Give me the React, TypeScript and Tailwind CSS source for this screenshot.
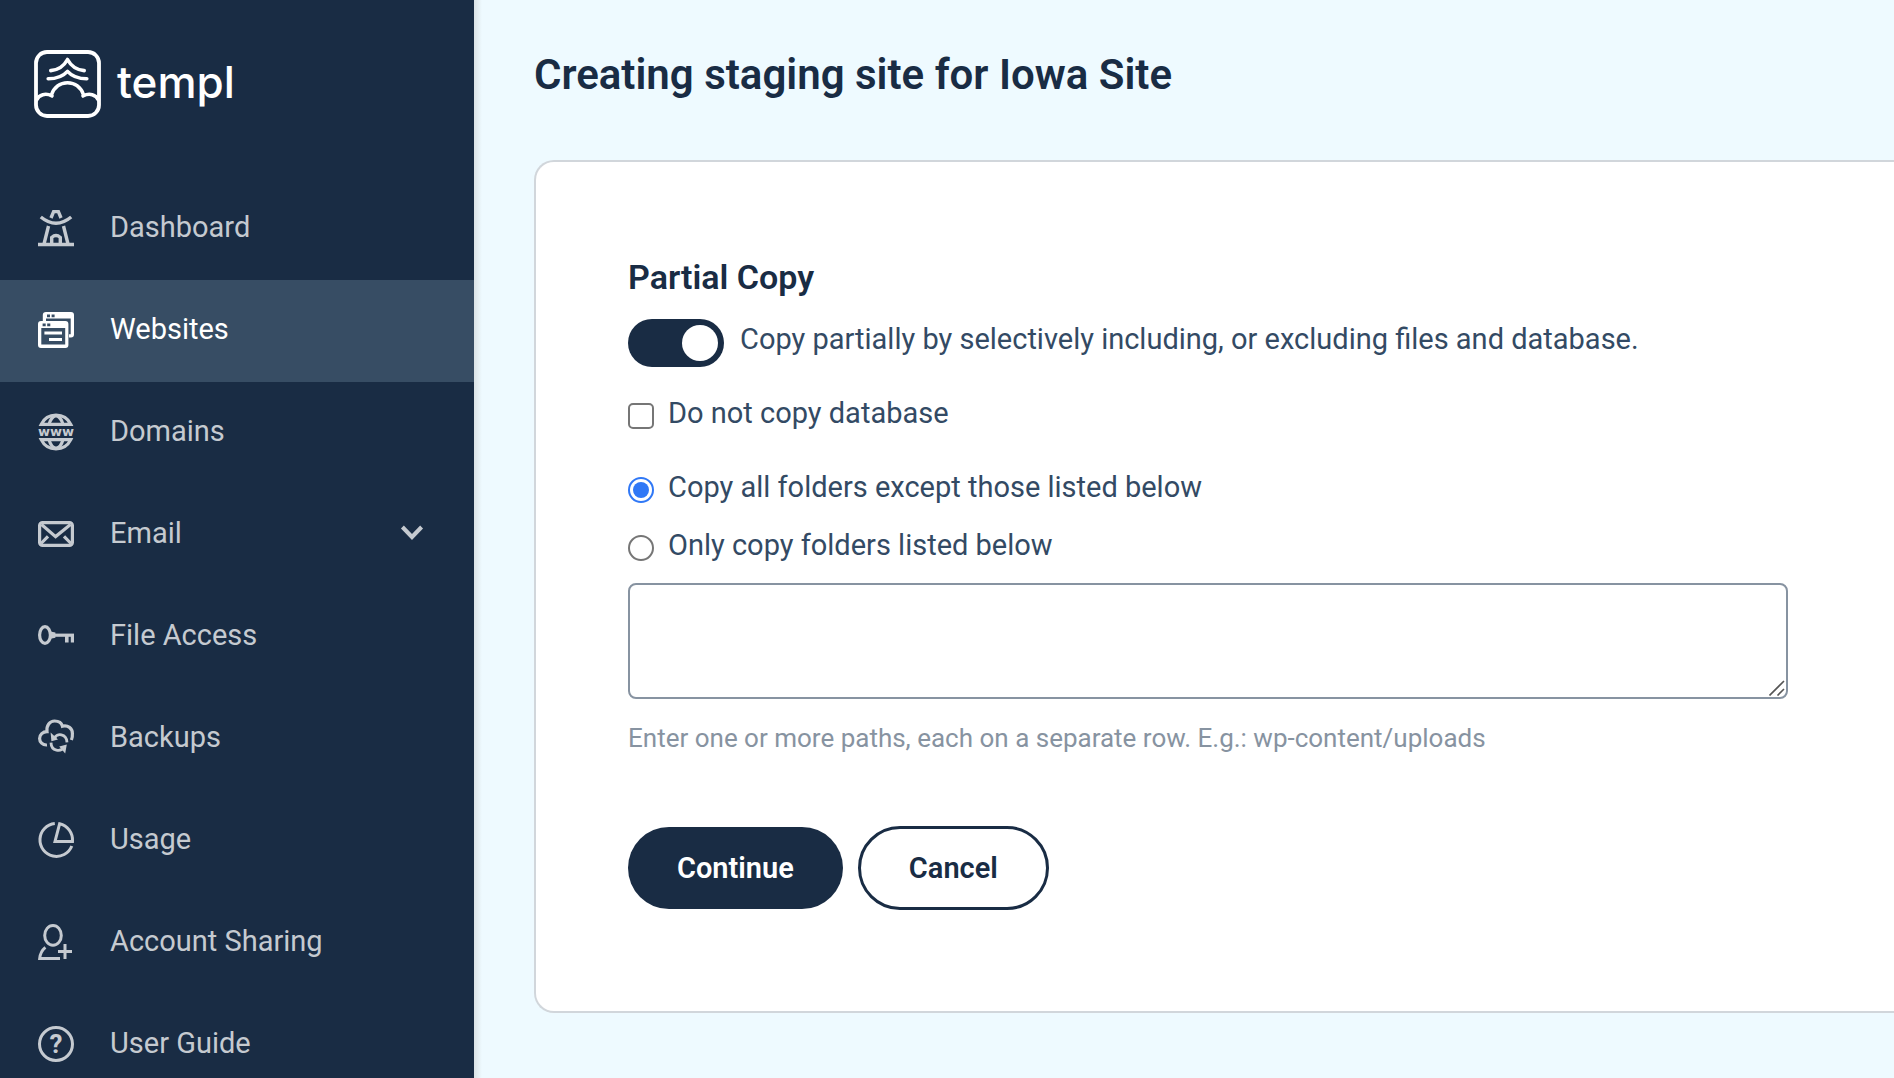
import { useState } from "react";
import type { ReactNode } from "react";

type NavItem = { label: string; icon: ReactNode; hasChildren?: boolean };

const navItems: NavItem[] = [
  {
    label: "Dashboard",
    icon: (
      <g strokeWidth="3.4">
        <path d="M13 8L15.6 1.6H20.4L23 8" />
        <path d="M2.8 7Q18 19.5 33.2 7" />
        <path d="M10.5 16L6 34M25.5 16L30 34M0 34.5H36" />
        <path d="M13.7 34V27.4Q18 23.6 22.3 27.4V34" />
      </g>
    ),
  },
  {
    label: "Websites",
    icon: (
      <g stroke="none" fill="currentColor">
        <path fillRule="evenodd" d="M8 0H33Q36 0 36 3V22.5Q36 25.5 33 25.5H31V22.3H32.7V6.4H8V9H4.8V3Q4.8 0 8 0ZM9 2.6V5.2H12V2.6ZM13.6 2.6V5.2H16.6V2.6Z" />
        <path fillRule="evenodd" d="M3 9H27.4Q30.4 9 30.4 12V33Q30.4 36 27.4 36H3Q0 36 0 33V12Q0 9 3 9ZM4.6 11.6V14.3H7.7V11.6ZM9.2 11.6V14.3H12.3V11.6ZM3.3 16V32.6H27.2V16Z" />
        <path d="M6.4 19.4H24V22.4H6.4ZM11 26H24V29H11Z" />
      </g>
    ),
  },
  {
    label: "Domains",
    icon: (
      <g strokeWidth="3.2">
        <path d="M3.2 10.4A16.5 16.5 0 0 1 32.8 10.4Z" />
        <path d="M11 10.4Q13 2.8 18 1.6Q23 2.8 25 10.4" />
        <path d="M3.2 25.6A16.5 16.5 0 0 0 32.8 25.6Z" />
        <path d="M11 25.6Q13 33.2 18 34.4Q23 33.2 25 25.6" />
        <text x="18" y="21.8" textAnchor="middle" fontSize="13" fontWeight="700" fontFamily="DejaVu Sans, sans-serif" stroke="none" fill="currentColor">www</text>
      </g>
    ),
  },
  {
    label: "Email",
    hasChildren: true,
    icon: (
      <g strokeWidth="3.2">
        <rect x="1.6" y="6.6" width="32.8" height="22.8" rx="3" />
        <path d="M3.5 8.5L17.6 20.6L32.5 8.5M3 27.5L10 20.3M33 27.5L26 20.3" />
      </g>
    ),
  },
  {
    label: "File Access",
    icon: (
      <g strokeWidth="3.2">
        <ellipse cx="7" cy="17" rx="5.4" ry="8.4" />
        <path d="M16 17.2H36" />
        <path d="M12.5 13.5L17.4 14.6V19.8L12.5 20.8ZM27 17H30.6V24.6H27ZM32.8 17H36V24.6H32.8Z" stroke="none" fill="currentColor" />
      </g>
    ),
  },
  {
    label: "Backups",
    icon: (
      <g strokeWidth="3.2">
        <path d="M9 25C4.5 25.3 1.6 22 1.6 18.4C1.6 14.6 4.8 11.6 9 11.6C8.2 5.6 11.8 1 16.6 1C20.6 1 23.6 3.2 24.4 6.2C30 4.8 34.4 8.4 34.4 13.4C34.6 16 34.2 18 33.4 20" />
        <path d="M16.5 18.4C18.5 12.6 28.6 13.4 29 22.4M13 22.6C13.2 31.4 23 32.4 26 27" strokeWidth="2.8" />
        <path d="M12.6 12.6L13.4 21.2L20 19.4ZM28.8 24.6L27.2 33.4L21.2 26.4Z" stroke="none" fill="currentColor" />
      </g>
    ),
  },
  {
    label: "Usage",
    icon: (
      <g strokeWidth="3">
        <path d="M16.8 1.5A16.5 16.5 0 1 0 33.8 24" />
        <path d="M21.6 1.8L17 19.4H34.5A16.8 16.8 0 0 0 21.6 1.8Z" />
      </g>
    ),
  },
  {
    label: "Account Sharing",
    icon: (
      <g strokeWidth="3">
        <ellipse cx="15" cy="11.4" rx="8.3" ry="9.9" />
        <path d="M7.4 23.4Q2.4 27.4 1.7 34.5H22" />
        <path d="M27 20V35M20 27.6H34" />
      </g>
    ),
  },
  {
    label: "User Guide",
    icon: (
      <g strokeWidth="3">
        <circle cx="18" cy="18" r="16.5" />
        <text x="18" y="27" textAnchor="middle" fontSize="26" fontWeight="700" fontFamily="Roboto, sans-serif" stroke="none" fill="currentColor">?</text>
      </g>
    ),
  },
];

function Logo() {
  return (
    <a href="#" className="flex items-center gap-4 pl-[34px] text-white">
      <svg width="67" height="68" viewBox="0 0 67 68" fill="none" stroke="currentColor" strokeWidth="3.8" strokeLinecap="round" strokeLinejoin="round">
        <rect x="2" y="2" width="63" height="64" rx="11" />
        <g strokeWidth="3.6">
          <path d="M16.8 20.6C24 20 30 16 33.5 9.5C37 16 43 20 50.2 20.6" />
          <path d="M14.2 28.8C22 28.8 29 26.4 33.5 21.4C38 26.4 45 28.8 52.8 28.8" />
          <path d="M17.4 45C20 37.4 26 32.8 33.5 32.8C41 32.8 47 37.4 49.6 45" />
          <path d="M2.6 50C5 44.6 11.6 42.6 18 46M64.4 50C62 44.6 55.4 42.6 49 46" />
        </g>
      </svg>
      <span className="pb-1 font-['Inter',sans-serif] text-[44px] leading-[64px] font-medium">templ</span>
    </a>
  );
}

function Sidebar({ active }: { active: string }) {
  return (
    <aside className="h-screen w-[474px] shrink-0 overflow-hidden bg-[#192c44] pt-[50px]">
      <Logo />
      <nav className="mt-[60px]">
        {navItems.map(item => (
          <a
            key={item.label}
            href="#"
            className={`flex h-[102px] items-center gap-9 pr-[50px] pb-0.5 pl-[38px] text-[29px] ${
              item.label === active ? "bg-[#374d64] text-white" : "text-[#c5cad0]"
            }`}
          >
            <svg width="36" height="36" viewBox="0 0 36 36" fill="none" stroke="currentColor" className="shrink-0 overflow-visible">
              {item.icon}
            </svg>
            <span className="flex-1">{item.label}</span>
            {item.hasChildren && (
              <svg width="24" height="20" viewBox="0 0 24 20" fill="none" stroke="currentColor" strokeWidth="4">
                <path d="M2.4 3L12 13L21.6 3" />
              </svg>
            )}
          </a>
        ))}
      </nav>
    </aside>
  );
}

export default function App() {
  const [partial, setPartial] = useState(true);
  const [skipDatabase, setSkipDatabase] = useState(false);
  const [mode, setMode] = useState("exclude");
  const [paths, setPaths] = useState("");

  const boxClass = "mt-[10px] size-[26px] shrink-0 appearance-none border-2 border-[#767676] bg-white";
  const radioClass = `${boxClass} rounded-full p-[3px] checked:border-[#3078f6] checked:bg-[#3078f6] checked:bg-clip-content`;

  return (
    <div className="flex min-h-screen bg-[#eefaff] font-['Roboto',sans-serif] text-[#192c44]">
      <Sidebar active="Websites" />
      <main className="min-w-0 flex-1 bg-linear-to-r from-[#dbe3e6] to-[#eefaff] bg-[length:8px_100%] bg-no-repeat pt-12 pl-[60px]">
        <h1 className="text-[42px] leading-[54px] font-semibold">Creating staging site for Iowa Site</h1>

        <section className="mt-[58px] rounded-l-[20px] border-2 border-r-0 border-[#d1d6db] bg-white pt-[95px] pr-[106px] pb-[101px] pl-[92px]">
          <h2 className="text-[34px] leading-10 font-semibold">Partial Copy</h2>

          <form onSubmit={e => e.preventDefault()} className="mt-[22px] text-[29px] leading-10 text-[#334a64]">
            <label className="flex items-start gap-4">
              <input
                type="checkbox"
                role="switch"
                checked={partial}
                onChange={e => setPartial(e.target.checked)}
                className="flex h-12 w-24 shrink-0 appearance-none items-center rounded-full bg-[#8793a1] px-[6px] before:size-9 before:rounded-full before:bg-white checked:justify-end checked:bg-[#192c44]"
              />
              Copy partially by selectively including, or excluding files and database.
            </label>

            <label className="mt-[26px] flex items-start gap-[14px]">
              <input
                type="checkbox"
                checked={skipDatabase}
                onChange={e => setSkipDatabase(e.target.checked)}
                className={`${boxClass} rounded-[5px] checked:bg-[#3078f6]`}
              />
              Do not copy database
            </label>

            <label className="mt-[34px] flex items-start gap-[14px]">
              <input
                type="radio"
                name="mode"
                checked={mode === "exclude"}
                onChange={() => setMode("exclude")}
                className={radioClass}
              />
              Copy all folders except those listed below
            </label>
            <label className="mt-[18px] flex items-start gap-[14px]">
              <input
                type="radio"
                name="mode"
                checked={mode === "include"}
                onChange={() => setMode("include")}
                className={radioClass}
              />
              Only copy folders listed below
            </label>

            <div className="relative mt-[18px] max-w-[1160px]">
              <textarea
                aria-label="Folder paths"
                aria-describedby="paths-hint"
                value={paths}
                onChange={e => setPaths(e.target.value)}
                className="block h-[116px] w-full rounded-lg border-2 border-[#8793a1] bg-white px-4 py-2 [&::-webkit-resizer]:hidden"
              />
              <svg width="16" height="16" viewBox="0 0 16 16" stroke="#555" strokeWidth="1.6" className="pointer-events-none absolute right-[3px] bottom-[3px]">
                <path d="M0.5 15.5L15 1M8.5 15.5L15 9" />
              </svg>
            </div>
            <p id="paths-hint" className="mt-[21px] text-[26px] leading-9 text-[#8793a1]">
              Enter one or more paths, each on a separate row. E.g.: wp-content/uploads
            </p>

            <div className="mt-[70px] flex items-center gap-[15px] font-semibold">
              <button type="submit" className="h-[82px] rounded-full bg-[#192c44] px-[49px] text-white">
                Continue
              </button>
              <button type="button" className="h-[84px] rounded-full border-[3px] border-[#192c44] bg-white px-12 text-[#192c44]">
                Cancel
              </button>
            </div>
          </form>
        </section>
      </main>
    </div>
  );
}
